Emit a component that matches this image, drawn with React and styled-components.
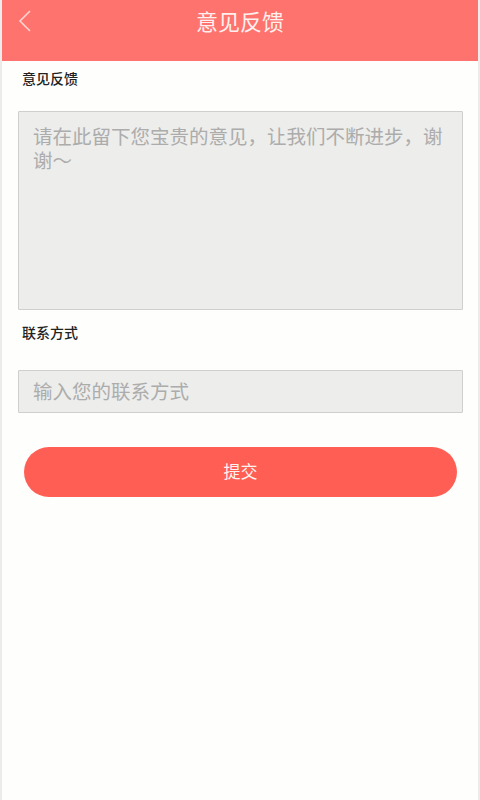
import React from "react";
import styled, { createGlobalStyle } from "styled-components";

const Global = createGlobalStyle`
  html, body { margin: 0; padding: 0; background: #fefefc; }
  body { font-family: "Noto Sans CJK SC", "Noto Sans", sans-serif; }
  * { box-sizing: border-box; }
`;

const Page = styled.div`
  width: 480px;
  min-height: 800px;
  background: #fefefc;
  border-left: 2px solid #ececea;
  border-right: 2px solid #ececea;
  display: flex;
  flex-direction: column;
`;

const Header = styled.header`
  height: 61px;
  background: #ff736f;
  display: grid;
  grid-template-columns: 40px 1fr 40px;
  align-items: start;
  padding-top: 5px;
`;

const Back = styled.button`
  border: 0;
  background: none;
  padding: 4px 0 0 16px;
  display: flex;
  cursor: pointer;
`;

const Title = styled.h1`
  margin: 0;
  text-align: center;
  color: #fff0ee;
  font-size: 22px;
  font-weight: 400;
  line-height: 30px;
`;

const Content = styled.main`
  display: flex;
  flex-direction: column;
  padding: 0 15px 0 16px;
`;

const Label = styled.div`
  margin: ${(p) => p.$top}px 0 0 4px;
  font-size: 14px;
  font-weight: 500;
  line-height: 20px;
  color: #222;
`;

const fieldStyle = `
  width: 100%;
  background: #ededeb;
  border: 1.5px solid #cfcfcd;
  border-radius: 1px;
  font-family: "Noto Sans CJK SC", "Noto Sans", sans-serif;
  font-size: 19.5px;
  color: #333;
  outline: none;
  &::placeholder { color: #acacac; }
`;

const TextArea = styled.textarea`
  ${fieldStyle}
  margin-top: 23px;
  height: 199px;
  padding: 12px 14px;
  line-height: 24px;
  resize: none;
`;

const Input = styled.input`
  ${fieldStyle}
  margin-top: 28px;
  height: 43px;
  padding: 0 14px 3px;
`;

const Submit = styled.button`
  margin: 34px 6px 0;
  height: 50px;
  padding: 0 0 4px;
  border: 0;
  border-radius: 25px;
  background: #ff5e54;
  color: #fff3f0;
  font-family: "Noto Sans CJK SC", "Noto Sans", sans-serif;
  font-size: 17px;
  cursor: pointer;
`;

export default function App() {
  return (
    <>
      <Global />
      <Page>
        <Header>
          <Back aria-label="返回">
            <svg width="14" height="24" viewBox="0 0 14 24">
              <path d="M12 2 L2 12 L12 22" fill="none" stroke="#ffd4d0" strokeWidth="1.6" />
            </svg>
          </Back>
          <Title>意见反馈</Title>
          <span />
        </Header>
        <Content>
          <Label $top={7}>意见反馈</Label>
          <TextArea placeholder="请在此留下您宝贵的意见，让我们不断进步，谢谢～" />
          <Label $top={12}>联系方式</Label>
          <Input placeholder="输入您的联系方式" />
          <Submit>提交</Submit>
        </Content>
      </Page>
    </>
  );
}
